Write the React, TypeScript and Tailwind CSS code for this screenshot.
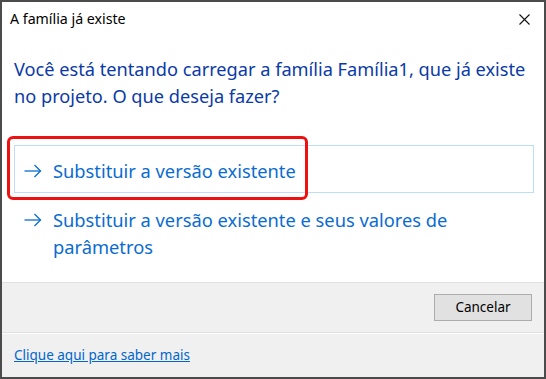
import React from "react";

const Arrow = () => (
  <svg width="18" height="14" viewBox="0 0 18 14" fill="none" stroke="currentColor" strokeWidth="1.3" className="shrink-0">
    <path d="M0.5 7H16.5" />
    <path d="M10.5 1L16.5 7L10.5 13" />
  </svg>
);

const CommandLink = ({ label, active }: { label: React.ReactNode; active?: boolean }) => (
  <div
    className={
      "flex items-start gap-[11px] pl-[9px] pr-3 border text-[#0a6cd0] " +
      (active ? "border-[#bcdff3] pt-[11px] pb-[8px]" : "border-transparent py-[3px]")
    }
  >
    <div className="h-[27px] flex items-center">
      <Arrow />
    </div>
    <div className="text-[18.3px] leading-[27px]">{label}</div>
  </div>
);

const App = () => {
  return (
    <div className="w-[546px] h-[379px] border-2 border-[#4b4b4b] bg-white flex flex-col font-['Noto_Sans',sans-serif] relative">
      <div className="h-[34px] flex items-center justify-between pl-[8px] pr-[14px]">
        <span className="text-[14.2px] text-black">A família já existe</span>
        <svg width="11" height="11" viewBox="0 0 11 11" stroke="#111" strokeWidth="1.1">
          <path d="M0.5 0.5L10.5 10.5M10.5 0.5L0.5 10.5" />
        </svg>
      </div>

      <div className="flex-1 pl-[12px] pr-[10px] pt-[20px]">
        <p className="text-[18.2px] leading-[27px] text-[#0b3aa6]">
          Você está tentando carregar a família Família1, que já existe no projeto. O que deseja fazer?
        </p>
        <div className="mt-[35px] mr-0 relative">
          <CommandLink label="Substituir a versão existente" active />
          <div className="absolute left-[-7px] top-[-9px] w-[301px] h-[64px] border-[3px] border-[#ee1111] rounded-[6px]" />
        </div>
        <div className="mt-[9px]">
          <CommandLink label={<>Substituir a versão existente e seus valores de<br />parâmetros</>} />
        </div>
      </div>

      <div className="h-[50px] bg-[#f0f0f0] border-t border-[#dfdfdf] flex items-center justify-end pr-[12px]">
        <button className="w-[98px] h-[27px] bg-[#e1e1e1] border border-[#adadad] text-[13.5px] text-black">
          Cancelar
        </button>
      </div>
      <div className="h-[45px] bg-[#f0f0f0] border-t border-[#dfdfdf] shadow-[inset_0_1px_0_#ffffff] flex items-center pl-[12px]">
        <a className="text-[13.5px] text-[#0066cc] underline">Clique aqui para saber mais</a>
      </div>
    </div>
  );
};

export default App;
